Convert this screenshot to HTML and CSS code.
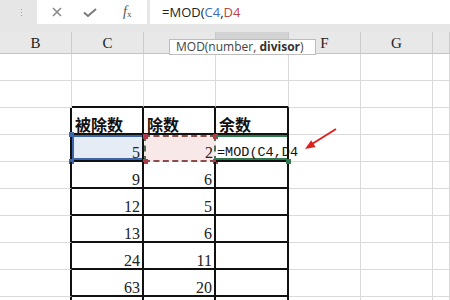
FILE: index.html
```html
<!DOCTYPE html>
<html lang="zh-CN">
<head>
    <meta charset="UTF-8">
    <title>MOD</title>
    <link rel="stylesheet" href="styles.css">
</head>
<body>
    <div class="excel">
        <div class="formula-bar">
            <div class="grip"><span></span><span></span><span></span></div>
            <div class="fx-tools">
                <svg class="tool" width="14" height="14" viewBox="0 0 14 14"><path d="M3 3 L11 11 M11 3 L3 11" stroke="#8a8a8a" stroke-width="1.6" fill="none"/></svg>
                <svg class="tool" width="16" height="14" viewBox="0 0 16 14"><path d="M2 7.5 L6 11 L14 4" stroke="#7a7a7a" stroke-width="2" fill="none"/></svg>
                <span class="fx"><i>f</i><sub>x</sub></span>
            </div>
            <div class="formula-input">=MOD(<span class="ref-c">C4</span>,<span class="ref-d">D4</span></div>
        </div>
        <div class="header-gap"></div>
        <div class="col-headers">
            <div class="ch">B</div>
            <div class="ch">C</div>
            <div class="ch"></div>
            <div class="ch active-col"></div>
            <div class="ch">F</div>
            <div class="ch">G</div>
            <div class="ch"></div>
        </div>
        <div class="sheet">
            <!-- row 1 -->
            <div class="cell"></div><div class="cell"></div><div class="cell"></div><div class="cell"></div><div class="cell"></div><div class="cell"></div><div class="cell"></div>
            <!-- row 2 -->
            <div class="cell"></div><div class="cell above"></div><div class="cell above"></div><div class="cell above"></div><div class="cell"></div><div class="cell"></div><div class="cell"></div>
            <!-- row 3 -->
            <div class="cell left"></div>
            <div class="cell t hd">被除数</div>
            <div class="cell t hd">除数</div>
            <div class="cell t hd">余数</div>
            <div class="cell"></div><div class="cell"></div><div class="cell"></div>
            <!-- row 4 -->
            <div class="cell left"></div>
            <div class="cell t num sel">5<span class="h h-tl blue"></span><span class="h h-bl blue"></span></div>
            <div class="cell t num ref">2<span class="h h-tl red"></span><span class="h h-tr red"></span><span class="h h-bl red"></span><span class="h h-br red"></span></div>
            <div class="cell t active">=MOD(C4,D4<span class="h h-br green"></span></div>
            <div class="cell"></div><div class="cell"></div><div class="cell"></div>
            <!-- row 5 -->
            <div class="cell left"></div>
            <div class="cell t num">9</div>
            <div class="cell t num">6</div>
            <div class="cell t"></div>
            <div class="cell"></div><div class="cell"></div><div class="cell"></div>
            <!-- row 6 -->
            <div class="cell left"></div>
            <div class="cell t num">12</div>
            <div class="cell t num">5</div>
            <div class="cell t"></div>
            <div class="cell"></div><div class="cell"></div><div class="cell"></div>
            <!-- row 7 -->
            <div class="cell left"></div>
            <div class="cell t num">13</div>
            <div class="cell t num">6</div>
            <div class="cell t"></div>
            <div class="cell"></div><div class="cell"></div><div class="cell"></div>
            <!-- row 8 -->
            <div class="cell left"></div>
            <div class="cell t num">24</div>
            <div class="cell t num">11</div>
            <div class="cell t"></div>
            <div class="cell"></div><div class="cell"></div><div class="cell"></div>
            <!-- row 9 -->
            <div class="cell left"></div>
            <div class="cell t num">63</div>
            <div class="cell t num">20</div>
            <div class="cell t"></div>
            <div class="cell"></div><div class="cell"></div><div class="cell"></div>
            <!-- row 10 -->
            <div class="cell left"></div>
            <div class="cell t"></div>
            <div class="cell t"></div>
            <div class="cell t"></div>
            <div class="cell"></div><div class="cell"></div><div class="cell"></div>
        </div>

        <div class="tip">MOD(number, <b>divisor</b>)</div>

        <svg class="arrow" width="450" height="300" viewBox="0 0 450 300">
            <line x1="336" y1="129" x2="312" y2="144" stroke="#e0201c" stroke-width="2"/>
            <polygon points="305,149 311.2,140.2 315.6,147" fill="#e0201c"/>
        </svg>
    </div>
</body>
</html>
```

FILE: styles.css
```css
body {
    margin: 0;
    background: #fff;
    overflow: hidden;
}

.excel {
    position: relative;
    width: 450px;
    height: 300px;
    overflow: hidden;
    background: #fff;
}

/* formula bar */
.formula-bar {
    display: flex;
    height: 24px;
    background: #e6e6e6;
}

.grip {
    width: 37px;
    display: flex;
    flex-direction: column;
    align-items: center;
    justify-content: center;
    gap: 2px;
}

.grip span {
    width: 1px;
    height: 1px;
    background: #9a9a9a;
    margin-left: 6px;
}

.fx-tools {
    width: 110px;
    background: #fff;
    display: flex;
    align-items: center;
    padding-left: 13px;
    box-sizing: border-box;
    gap: 18px;
}

.fx {
    font-family: "Liberation Serif", serif;
    font-size: 14px;
    color: #555;
    margin-left: 7px;
}

.fx sub {
    font-size: 9px;
    vertical-align: -1px;
}

.formula-input {
    flex: 1;
    margin-left: 3px;
    background: #fff;
    padding-left: 12px;
    font-family: "Open Sans", sans-serif;
    font-size: 13px;
    line-height: 24px;
    color: #222;
}

.ref-c {
    color: #3e6db5;
}

.ref-d {
    color: #b5454a;
}

.header-gap {
    height: 8px;
    background: #e6e6e6;
}

/* column headers */
.col-headers {
    display: grid;
    grid-template-columns: 72px 72px 72px 73px 72px 72px 1fr;
    height: 22px;
    background: #e8e8e8;
    border-bottom: 1px solid #c4c4c4;
    box-sizing: border-box;
}

.ch {
    border-right: 1px solid #cbcbcb;
    text-align: center;
    font-family: "Liberation Serif", serif;
    font-size: 15px;
    line-height: 22px;
    color: #222;
}

.active-col {
    background: #d3d3d3;
}

/* sheet */
.sheet {
    display: grid;
    grid-template-columns: 72px 72px 72px 73px 72px 72px 1fr;
    grid-auto-rows: 27px;
}

.cell {
    position: relative;
    box-sizing: border-box;
    border-right: 1px solid #dadada;
    border-bottom: 1px solid #dadada;
}

.cell.left {
    border-right: 2px solid #111;
}

.cell.above {
    border-bottom: 2px solid #111;
}

.cell.t {
    border-right: 2px solid #111;
    border-bottom: 2px solid #111;
}

.hd {
    display: flex;
    align-items: flex-end;
    padding-left: 3px;
    font-family: "Noto Sans CJK SC", sans-serif;
    font-weight: 700;
    font-size: 16px;
    line-height: 17px;
    color: #111;
}

.num {
    display: flex;
    align-items: flex-end;
    justify-content: flex-end;
    padding-right: 2px;
    font-family: "Liberation Serif", serif;
    font-size: 16px;
    line-height: 15px;
    color: #222;
}

.sel {
    background: #e6ecf6;
    box-shadow: inset 2px 2px 0 #3d66aa, inset 0 -2px 0 #3d66aa;
}

.cell.ref {
    background: #f8e8e8;
    border: 2px dashed #8b4c4c;
    border-left-color: #4f6f55;
    border-right-color: #4f6f55;
    padding-right: 1px;
}

.active {
    display: flex;
    align-items: flex-end;
    box-shadow: inset 0 2px 0 #2e7a4e, inset 0 -2px 0 #2e7a4e;
    white-space: nowrap;
    padding: 0 0 0 1px;
    font-family: "Liberation Mono", monospace;
    font-size: 13.5px;
    line-height: 15px;
    color: #111;
    z-index: 1;
}

/* selection handles */
.h {
    position: absolute;
    width: 5px;
    height: 5px;
}

.h-tl { left: -3px; top: -3px; }
.h-tr { right: -4px; top: -3px; }
.h-bl { left: -3px; bottom: -4px; }
.h-br { right: -4px; bottom: -4px; }

.blue { background: #3d66aa; }
.red { background: #b03a48; }
.green { background: #2e7a4e; }

/* function tooltip */
.tip {
    position: absolute;
    left: 169px;
    top: 39px;
    width: 147px;
    height: 16px;
    box-sizing: border-box;
    background: #fff;
    border: 1px solid #bdbdbd;
    font-family: "Open Sans", sans-serif;
    font-size: 12px;
    line-height: 14px;
    color: #444;
    padding-left: 6px;
    white-space: nowrap;
    z-index: 2;
}

.tip b {
    color: #333;
}

.arrow {
    position: absolute;
    left: 0;
    top: 0;
    pointer-events: none;
    z-index: 3;
}
```
